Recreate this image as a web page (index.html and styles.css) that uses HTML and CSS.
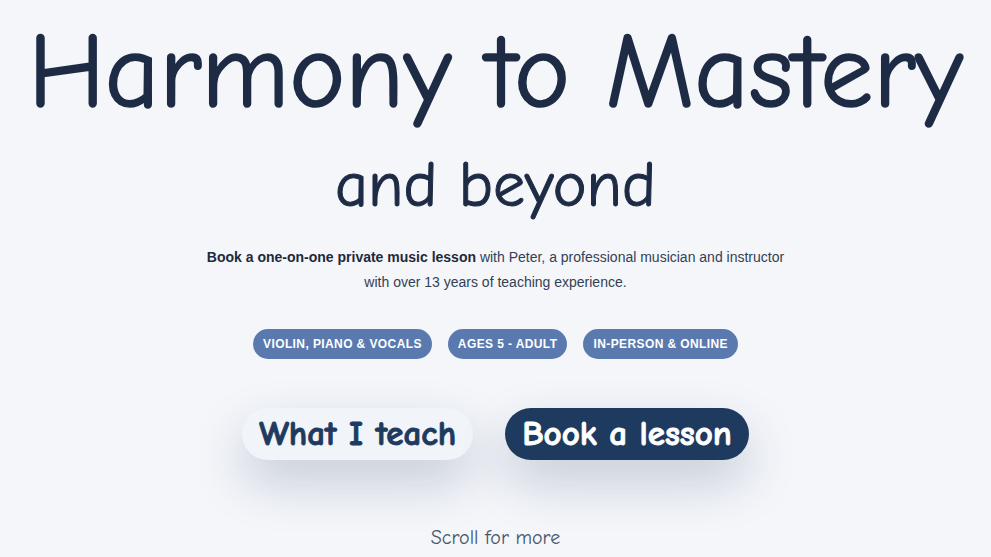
FILE: index.html
```html
<!DOCTYPE html>
<html lang="en">
<head>
<meta charset="utf-8">
<title>Harmony to Mastery</title>
<link rel="stylesheet" href="styles.css">
</head>
<body>
<main class="hero">
  <h1 class="title">Harmony to Mastery</h1>
  <h2 class="subtitle">and beyond</h2>
  <p class="intro"><strong>Book a one-on-one private music lesson</strong> with Peter, a professional musician and instructor<br>with over 13 years of teaching experience.</p>
  <ul class="badges">
    <li class="badge">Violin, Piano &amp; Vocals</li>
    <li class="badge">Ages 5 - Adult</li>
    <li class="badge">In-Person &amp; Online</li>
  </ul>
  <div class="actions">
    <a class="btn btn-light" href="#teach">What I teach</a>
    <a class="btn btn-dark" href="#book">Book a lesson</a>
  </div>
  <p class="scroll">Scroll for more</p>
</main>
</body>
</html>
```
FILE: styles.css
```css
html, body {
  margin: 0;
  padding: 0;
  background: #f4f6fa;
}
body {
  font-family: "Comic Sans MS", "Comic Neue", "Comic Sans", cursive, sans-serif;
  color: #1e2b45;
}
.hero {
  display: flex;
  flex-direction: column;
  align-items: center;
  text-align: center;
}
.title {
  margin: 0;
  font-size: 106px;
  font-weight: 400;
  line-height: 106px;
  padding-top: 19px;
  white-space: nowrap;
  -webkit-text-stroke: 1.6px currentColor;
}
.subtitle {
  margin: 28px 0 0;
  font-size: 64px;
  font-weight: 400;
  line-height: 64px;
  -webkit-text-stroke: 1px currentColor;
}
.intro {
  margin: 28px 0 0;
  font-family: "Liberation Sans", Arial, sans-serif;
  font-size: 14px;
  line-height: 25px;
  color: #334155;
}
.intro strong {
  color: #1e293b;
}
.badges {
  list-style: none;
  margin: 34px 0 0;
  padding: 0;
  display: flex;
  gap: 16px;
}
.badge {
  background: #5a7aaf;
  color: #fff;
  font-family: "Liberation Sans", Arial, sans-serif;
  font-weight: 700;
  font-size: 12px;
  letter-spacing: 0.4px;
  text-transform: uppercase;
  height: 30px;
  line-height: 30px;
  padding: 0 10px;
  border-radius: 15px;
}
.actions {
  margin-top: 49px;
  display: flex;
  gap: 32px;
}
.btn {
  display: block;
  height: 52px;
  line-height: 52px;
  padding: 0 17px;
  border-radius: 26px;
  font-size: 35px;
  font-weight: 700;
  -webkit-text-stroke: 0.9px currentColor;
  text-decoration: none;
  box-shadow: 0 22px 50px rgba(30, 50, 90, 0.22);
}
.btn-light {
  background: #f1f4f8;
  color: #1e3a5f;
}
.btn-dark {
  background: #1e3a5f;
  color: #fff;
}
.scroll {
  margin: 66px 0 0;
  font-size: 20px;
  line-height: 24px;
  color: #475569;
}
```
